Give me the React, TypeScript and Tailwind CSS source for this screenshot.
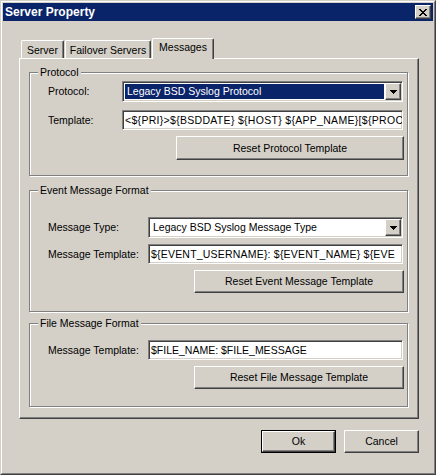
import React from "react";

const sunken =
  "border border-t-[#808080] border-l-[#808080] border-r-white border-b-white shadow-[inset_1px_1px_0_#404040,inset_-1px_-1px_0_#d4d0c8]";
const raised =
  "border border-t-white border-l-white border-r-[#404040] border-b-[#404040] shadow-[inset_-1px_-1px_0_#808080]";
const etched = "relative border border-[#808080] shadow-[inset_1px_1px_0_#fff,1px_1px_0_#fff]";

function PixelGlyph({ rows }: { rows: string[] }) {
  const w = rows[0].length;
  const h = rows.length;
  return (
    <svg width={w} height={h} viewBox={`0 0 ${w} ${h}`} shapeRendering="crispEdges" className="block">
      {rows.flatMap((r, y) =>
        r.split("").map((c, x) => (c === "x" ? <rect key={`${x}-${y}`} x={x} y={y} width={1} height={1} fill="#000" /> : null))
      )}
    </svg>
  );
}

const closeRows = ["xx....xx", ".xx..xx.", "..xxxx..", "...xx...", "..xxxx..", ".xx..xx.", "xx....xx"];
const arrowRows = ["xxxxxxx", ".xxxxx.", "..xxx..", "...x..."];

function Combo({ w, text, selected }: { w: string; text: string; selected?: boolean }) {
  return (
    <div className={`${sunken} ${w} h-[21px] bg-white p-px flex shrink-0`}>
      <div className="flex-1 min-w-0 flex items-center">
        <div
          className={`m-px h-[15px] flex-1 flex items-center pl-[2px] whitespace-nowrap overflow-hidden ${
            selected ? "bg-[#0a246a] text-white" : "text-black"
          }`}
        >
          {text}
        </div>
      </div>
      <div className={`${raised} w-[16px] h-full bg-[#d4d0c8] flex items-center justify-center shrink-0`}>
        <PixelGlyph rows={arrowRows} />
      </div>
    </div>
  );
}

function TextInput({ w, text, spacing }: { w: string; text: string; spacing?: string }) {
  return (
    <div
      className={`${sunken} ${w} ${spacing ?? ""} h-[20px] bg-white flex items-center pl-[2px] pr-px overflow-hidden whitespace-nowrap shrink-0`}
    >
      {text}
    </div>
  );
}

function Btn({ w, h, ml, text }: { w: string; h: string; ml: string; text: string }) {
  return (
    <div className={`${raised} ${w} ${h} ${ml} bg-[#d4d0c8] flex items-center justify-center shrink-0`}>{text}</div>
  );
}

function GroupTitle({ text }: { text: string }) {
  return <span className="absolute left-[8px] -top-[7px] px-[2px] bg-[#d4d0c8] leading-[13px]">{text}</span>;
}

export default function App() {
  return (
    <div className="w-[436px] h-[475px] bg-[#d4d0c8] border border-t-[#d4d0c8] border-l-[#d4d0c8] border-r-[#404040] border-b-[#404040] font-['Liberation_Sans',Arial,sans-serif] text-[10.5px] leading-[13px] text-black">
      <div className="h-full border border-t-white border-l-white border-r-[#808080] border-b-[#808080] p-px flex flex-col">
        {/* Title bar */}
        <div className="h-[18px] bg-[#0a246a] flex items-center justify-between pl-[2px] pr-[2px] shrink-0">
          <span className="text-white font-bold text-[12px] leading-[14px]">Server Property</span>
          <div className={`${raised} w-[16px] h-[14px] bg-[#d4d0c8] flex items-center justify-center`}>
            <PixelGlyph rows={closeRows} />
          </div>
        </div>

        {/* Tabs + panel */}
        <div className="flex flex-col pl-[16px]">
          <div className="mt-[17px] h-[20px] flex items-end">
            <div className="ml-[2px] w-[43px] h-[18px] border-t border-l border-r border-t-white border-l-white border-r-[#404040] shadow-[inset_-1px_0_0_#808080] rounded-t-[2px] flex items-center justify-center pt-px">
              Server
            </div>
            <div className="ml-px w-[86px] h-[18px] border-t border-l border-r border-t-white border-l-white border-r-[#404040] shadow-[inset_-1px_0_0_#808080] rounded-t-[2px] flex items-center justify-center pt-px">
              Failover Servers
            </div>
            <div className="ml-px w-[62px] h-[21px] -mb-px relative z-10 bg-[#d4d0c8] border-t border-l border-r border-t-white border-l-white border-r-[#404040] shadow-[inset_-1px_0_0_#808080] rounded-t-[2px] flex items-center justify-center pb-[3px]">
              Messages
            </div>
          </div>

          <div className="w-[400px] h-[361px] border border-t-white border-l-white border-r-[#404040] border-b-[#404040] shadow-[inset_-1px_-1px_0_#808080] flex flex-col">
            {/* Protocol */}
            <div className={`${etched} ml-[9px] mt-[13px] w-[379px] h-[104px] pl-[18px] pt-[8px] flex flex-col`}>
              <GroupTitle text="Protocol" />
              <div className="flex items-center">
                <div className="w-[74px]">Protocol:</div>
                <Combo w="w-[281px]" text="Legacy BSD Syslog Protocol" selected />
              </div>
              <div className="flex items-center mt-[8px]">
                <div className="w-[74px]">Template:</div>
                <TextInput
                  w="w-[281px]"
                  spacing="tracking-[0.3px]"
                  text="<${PRI}>${BSDDATE} ${HOST} ${APP_NAME}[${PROC"
                />
              </div>
              <div className="flex mt-[6px]">
                <Btn w="w-[228px]" h="h-[24px]" ml="ml-[128px]" text="Reset Protocol Template" />
              </div>
            </div>

            {/* Event Message Format */}
            <div className={`${etched} ml-[9px] mt-[14px] w-[379px] h-[122px] pl-[18px] pt-[26px] flex flex-col`}>
              <GroupTitle text="Event Message Format" />
              <div className="flex items-center">
                <div className="w-[100px]">Message Type:</div>
                <Combo w="w-[255px]" text="Legacy BSD Syslog Message Type" />
              </div>
              <div className="flex items-center mt-[6px]">
                <div className="w-[100px]">Message Template:</div>
                <TextInput w="w-[255px]" spacing="tracking-[0.2px]" text="${EVENT_USERNAME}: ${EVENT_NAME} ${EVE" />
              </div>
              <div className="flex mt-[6px]">
                <Btn w="w-[210px]" h="h-[23px]" ml="ml-[146px]" text="Reset Event Message Template" />
              </div>
            </div>

            {/* File Message Format */}
            <div className={`${etched} ml-[9px] mt-[11px] w-[379px] h-[84px] pl-[18px] pt-[16px] flex flex-col`}>
              <GroupTitle text="File Message Format" />
              <div className="flex items-center">
                <div className="w-[100px]">Message Template:</div>
                <TextInput w="w-[255px]" text="$FILE_NAME: $FILE_MESSAGE" />
              </div>
              <div className="flex mt-[6px]">
                <Btn w="w-[210px]" h="h-[23px]" ml="ml-[146px]" text="Reset File Message Template" />
              </div>
            </div>
          </div>
        </div>

        {/* Footer buttons */}
        <div className="flex justify-end gap-[8px] mt-[11px] pr-[14px]">
          <div className="w-[75px] h-[23px] border border-black flex">
            <div className={`${raised} flex-1 bg-[#d4d0c8] flex items-center justify-center`}>Ok</div>
          </div>
          <div className={`${raised} w-[75px] h-[23px] bg-[#d4d0c8] flex items-center justify-center`}>Cancel</div>
        </div>
      </div>
    </div>
  );
}
